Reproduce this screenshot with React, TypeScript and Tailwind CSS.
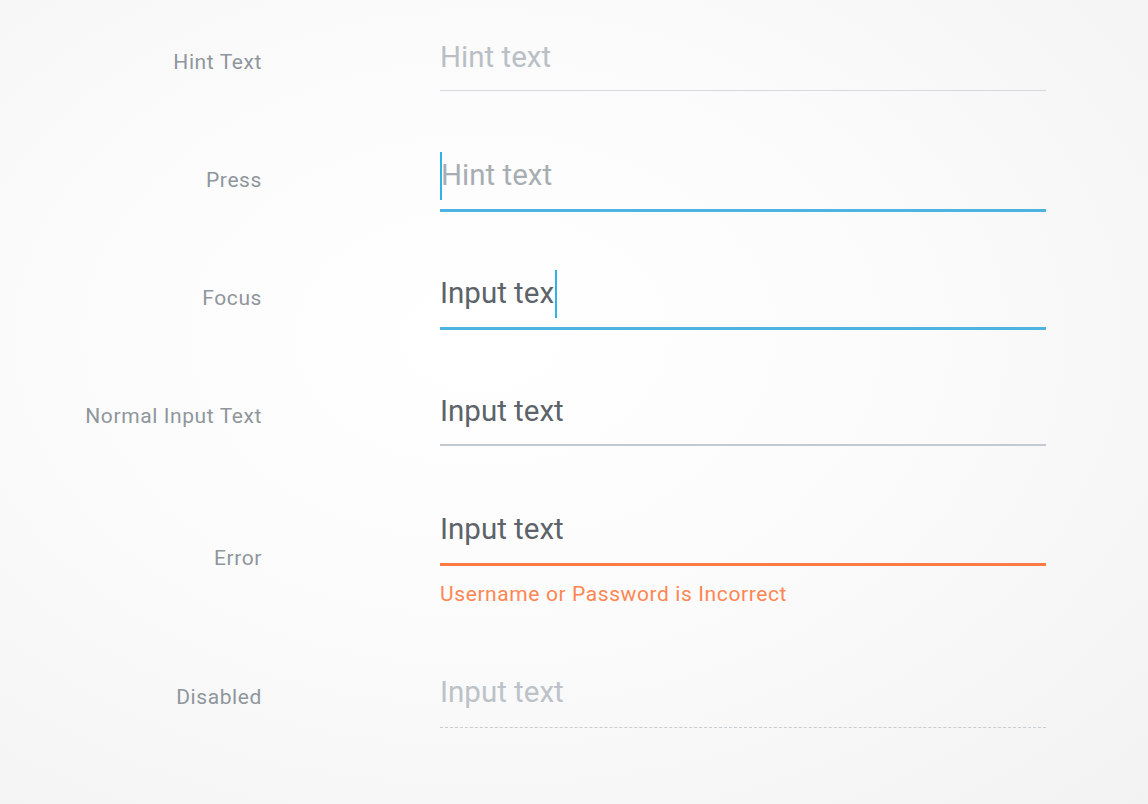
import React from "react";

const font = { fontFamily: "Roboto, 'Noto Sans', sans-serif" };

function Row({
  label,
  children,
  tall,
}: {
  label: string;
  children: React.ReactNode;
  tall?: boolean;
}) {
  return (
    <div className={`flex ${tall ? "h-[163px]" : "h-[118px]"}`}>
      <div className="w-[262px] shrink-0 flex items-start">
        <div
          className={`w-full text-right text-[21px] tracking-[0.6px] leading-[24px] text-[#8f969c] ${
            tall ? "mt-[35px]" : "mt-[11px]"
          }`}
        >
          {label}
        </div>
      </div>
      <div className="ml-[178px] w-[606px]">{children}</div>
    </div>
  );
}

function Caret({ className = "" }: { className?: string }) {
  return (
    <span
      className={`inline-block w-[2px] h-[48px] bg-[#2eb4e4] align-middle -my-[6px] relative top-[1px] ${className}`}
    />
  );
}

export default function App() {
  return (
    <div
      className="w-[1148px] h-[804px] overflow-hidden bg-[radial-gradient(ellipse_at_42%_42%,#ffffff_0%,#fbfbfb_45%,#f2f2f2_100%)]"
      style={font}
    >
      <div className="pt-[39px] flex flex-col">
        <Row label="Hint Text">
          <div className="h-[52px] border-b border-[#d6dadd] text-[29.5px] leading-[36px] text-[#b9bfc4]">
            Hint text
          </div>
        </Row>
        <Row label="Press">
          <div className="h-[55px] border-b-[3px] border-[#4eb3e0] text-[29.5px] leading-[36px] text-[#a7aeb3] flex items-start">
            <Caret />
            <span className="-ml-[1px]">Hint text</span>
          </div>
        </Row>
        <Row label="Focus">
          <div className="h-[55px] border-b-[3px] border-[#4eb3e0] text-[29.5px] leading-[36px] text-[#5c6369] flex items-start">
            <span>Input tex</span>
            <Caret className="ml-[1px]" />
          </div>
        </Row>
        <Row label="Normal Input Text">
          <div className="h-[53px] border-b-2 border-[#c3c9ce] text-[29.5px] leading-[36px] text-[#5c6369]">
            Input text
          </div>
        </Row>
        <Row label="Error" tall>
          <div className="h-[55px] border-b-[3px] border-[#ff7a45] text-[29.5px] leading-[36px] text-[#5c6369]">
            Input text
          </div>
          <div className="mt-[16px] text-[21px] tracking-[0.6px] leading-[24px] text-[#ff8652]">
            Username or Password is Incorrect
          </div>
        </Row>
        <Row label="Disabled">
          <div className="h-[54px] border-b border-dashed border-[#c8cdd1] text-[29.5px] leading-[36px] text-[#bcc2c7]">
            Input text
          </div>
        </Row>
      </div>
    </div>
  );
}
